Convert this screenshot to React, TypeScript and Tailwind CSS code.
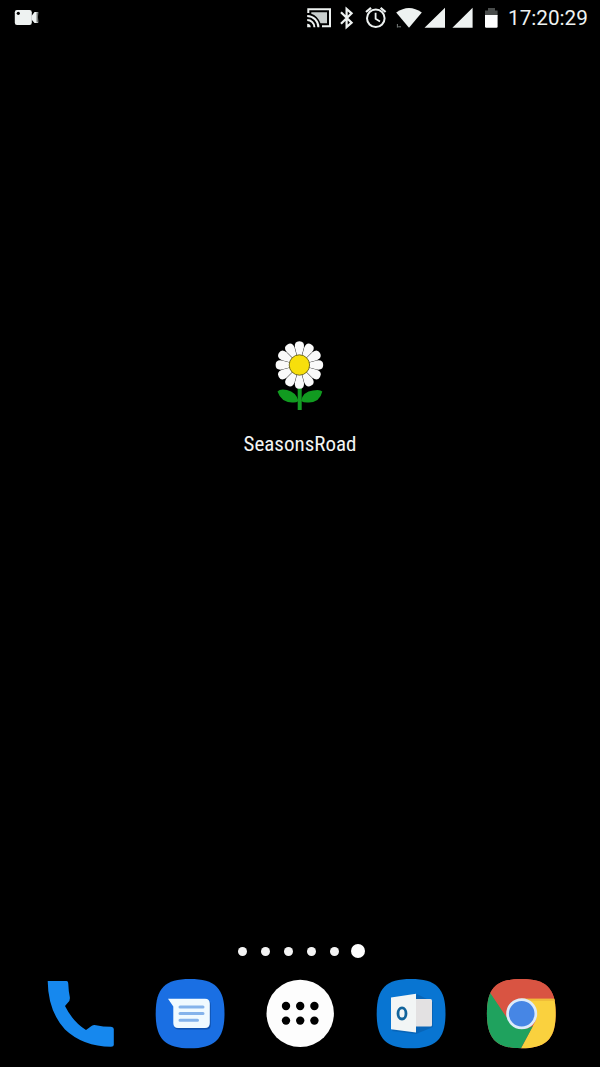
const petals = [0, 30, 60, 90, 120, 150, 180, 210, 240, 270, 300, 330];

function StatusBar() {
  return (
    <header className="flex h-9 items-start text-[#eef2f1]">
      <svg className="ml-[14px] h-9 w-[28px]" viewBox="14 0 28 36" fill="currentColor">
        <rect x="14.8" y="10" width="17" height="15" rx="2.2" />
        <path d="M31.5 16 L34.5 12 H38.2 Q36.2 17.5 38.2 23 H34.5 L31.5 19.5Z" />
        <path d="M36.5 12.3 H38.5 Q37.2 17.5 38.6 22.6 H36.5Z" fill="#747877" />
        <circle cx="18.3" cy="13.3" r="1.6" fill="#000" />
      </svg>
      <svg className="ml-auto h-9 w-[200px]" viewBox="303 0 200 36" fill="none" stroke="currentColor" strokeWidth="2">
        <path d="M308.3 13 V9.2 H330 V26.2 H322" />
        <path d="M311.3 12.2 H327 V23.3 H320.5 Q317.5 15.7 311.3 13.8Z" fill="#c9cecd" stroke="none" />
        <path d="M307.2 15.9 A11.3 11.3 0 0 1 318.4 27.2 M307.2 20 A7.2 7.2 0 0 1 314.4 27.2" />
        <path d="M307.2 23.7 A3.5 3.5 0 0 1 310.7 27.2 H307.2Z" fill="currentColor" stroke="none" />
        <path d="M341 12.3 L351.6 22.6 L346.6 27 V9 L351.6 13.4 L341 23.7" strokeWidth="2.2" />
        <circle cx="375.8" cy="18.2" r="8.8" />
        <path d="M375.6 12.8 V18.8 L380 21.4" strokeWidth="1.8" />
        <path d="M366 12 L371 7.9 M380.6 7.9 L385.6 12" strokeWidth="2.2" />
        <path d="M396.2 12.5 Q409 3.3 421.8 12.5 L409 27.8Z" fill="currentColor" stroke="none" />
        <path d="M397.4 24 V27.6 M398.2 26.8 H401" strokeWidth="1" stroke="#777d7b" />
        <path d="M445 7.7 V27.8 H424.5Z M472.6 7.7 V27.8 H452.4Z" fill="currentColor" stroke="none" />
        <path d="M485 16 V10.4 H488 V8 H495 V10.4 H497.6 V16Z" fill="#494c4b" stroke="none" />
        <path d="M485 15 H497.6 V26.5 Q497.6 27.8 496.4 27.8 H486.2 Q485 27.8 485 26.5Z" fill="#fff" stroke="none" />
      </svg>
      <time className="ml-[5px] w-[92px] whitespace-nowrap font-['Roboto',sans-serif] text-[20.7px] leading-[37px]">17:20:29</time>
    </header>
  );
}

function Flower() {
  return (
    <svg className="h-[90px] w-[140px]" viewBox="0 0 140 90">
      <path d="M69.7 55 V80" stroke="#159b24" strokeWidth="4" />
      <path d="M68.5 71 Q66 62 57 60 Q50 58.5 47.5 61.5 Q51 72 62 72.5 Q66 73 68.5 71Z" fill="#119b20" />
      <path d="M71 71 Q73 61.5 83 60.5 Q90 59 92.3 61.5 Q90 72 79 72.5 Q74 73 71 71Z" fill="#119b20" />
      {petals.map((angle) => (
        <path
          key={angle}
          d="M67.2 26 L64.9 17.5 Q64 11.2 69.4 11.2 Q74.8 11.2 73.9 17.5 L71.6 26Z"
          transform={`rotate(${angle} 69.4 35)`}
          fill="#fafafa"
        />
      ))}
      <circle cx="69.4" cy="35" r="10.2" fill="#f7df0c" stroke="#57500d" strokeWidth="0.8" />
    </svg>
  );
}

function PageDots() {
  return (
    <div className="flex h-4 items-center justify-center">
      <div className="ml-[2px] flex items-center gap-[14px]">
        <i className="size-[9px] rounded-full bg-[#f4f4f4]" />
        <i className="size-[9px] rounded-full bg-[#f4f4f4]" />
        <i className="size-[9px] rounded-full bg-[#f4f4f4]" />
        <i className="size-[9px] rounded-full bg-[#f4f4f4]" />
        <i className="size-[9px] rounded-full bg-[#f4f4f4]" />
        <i className="-ml-[2px] size-[14px] rounded-full bg-white" />
      </div>
    </div>
  );
}

const tile = "M45 9 C70 9 79.5 18 79.5 43.5 C79.5 69 70 78.3 45 78.3 C20 78.3 10.7 69 10.7 43.5 C10.7 18 20 9 45 9Z";

function Dock() {
  return (
    <nav className="grid h-[90px] grid-cols-5 px-[25px]">
      <svg className="mx-auto size-[90px]" viewBox="0 0 90 90" role="img" aria-label="Phone">
        <path d="M12.7 11 H31.5 Q33.2 11 33.3 14 Q33.6 22 34.8 27 Q35.3 30.5 33 32.5 L30 36 Q38 52 51 60 L56.5 56 Q58.5 54.6 61 55.2 Q68 56.7 76 56.8 Q78.8 57 78.8 59 V75 Q78.8 76.8 76 76.8 Q48 76.5 30 59.5 Q13 41 12.7 11Z" fill="#1688ee" />
      </svg>
      <svg className="mx-auto size-[90px]" viewBox="0 0 90 90" role="img" aria-label="Messages">
        <path d={tile} fill="#1a6fe3" />
        <path d="M24 30 H61 Q65.8 30 65.8 35 V55 Q65.8 59.5 61 59.5 H34 Q29 59.5 29 55 V37Z" fill="#1053b0" />
        <path d="M23 28.7 H60 Q64.8 28.7 64.8 33.5 V53 Q64.8 58 60 58 H33 Q28.3 58 28.3 53 V36.5Z" fill="#f0faff" />
        <path d="M35 37 H58 M35 43.6 H58 M35 50.2 H52.5" stroke="#84b3eb" strokeWidth="3" strokeLinecap="round" />
      </svg>
      <svg className="mx-auto size-[90px]" viewBox="0 0 90 90" role="img" aria-label="Apps">
        <circle cx="45.2" cy="43.4" r="33.7" fill="#fdfdfd" />
        <g fill="#000">
          <circle cx="31" cy="36" r="4.2" />
          <circle cx="45.2" cy="36" r="4.2" />
          <circle cx="59.4" cy="36" r="4.2" />
          <circle cx="31" cy="50.6" r="4.2" />
          <circle cx="45.2" cy="50.6" r="4.2" />
          <circle cx="59.4" cy="50.6" r="4.2" />
        </g>
      </svg>
      <svg className="mx-auto size-[90px]" viewBox="0 0 90 90" role="img" aria-label="Outlook">
        <path d={tile} transform="translate(1 0)" fill="#0875d2" />
        <path d="M27 61 L51 64 L68 57 V32 L52 24Z" fill="#0865b8" />
        <path d="M49 29 H65.5 Q67 29 67 30.5 V55 Q67 56.5 65.5 56.5 H49Z" fill="#e3e1e2" />
        <path d="M26 27.5 L51 23.7 V62.5 L26 59.2Z" fill="#f2f5f5" />
        <ellipse cx="37" cy="43.4" rx="4" ry="5.6" fill="none" stroke="#12649c" strokeWidth="2.8" />
      </svg>
      <svg className="mx-auto size-[90px]" viewBox="0 0 90 90" role="img" aria-label="Chrome">
        <defs>
          <clipPath id="chrome-tile"><path d={tile} transform="translate(1.2 0)" /></clipPath>
        </defs>
        <g clipPath="url(#chrome-tile)">
          <path d="M0 0 H90 V90 H0Z" fill="#d95442" />
          <path d="M46 28.5 H90 V90 H40 L61 50Z" fill="#fad13e" />
          <path d="M46 28.5 H90 V31 H52Z" fill="#f0bd39" />
          <path d="M0 0 L32 47 Q39 60 52 58.5 L58 56 L45 80 V90 H0Z" fill="#1fa25e" />
          <path d="M0 0 H90 V28.5 H47 Q31 29 32 48 L14 21Z" fill="#d95442" />
        </g>
        <circle cx="46.7" cy="43.7" r="15.5" fill="#dcebfa" />
        <circle cx="46.7" cy="43.7" r="12.8" fill="#4686e5" />
      </svg>
    </nav>
  );
}

export default function App() {
  return (
    <div className="flex h-[1067px] w-[600px] flex-col overflow-hidden bg-black">
      <StatusBar />
      <main className="flex flex-1 flex-col items-center pt-[294px]">
        <Flower />
        <span className="mt-[9px] whitespace-nowrap font-['Roboto_Condensed','Roboto',sans-serif] text-[21px] leading-[30px] text-[#f2f4f3]">SeasonsRoad</span>
      </main>
      <footer className="flex h-[124px] flex-col gap-[11px]">
        <PageDots />
        <Dock />
      </footer>
    </div>
  );
}
